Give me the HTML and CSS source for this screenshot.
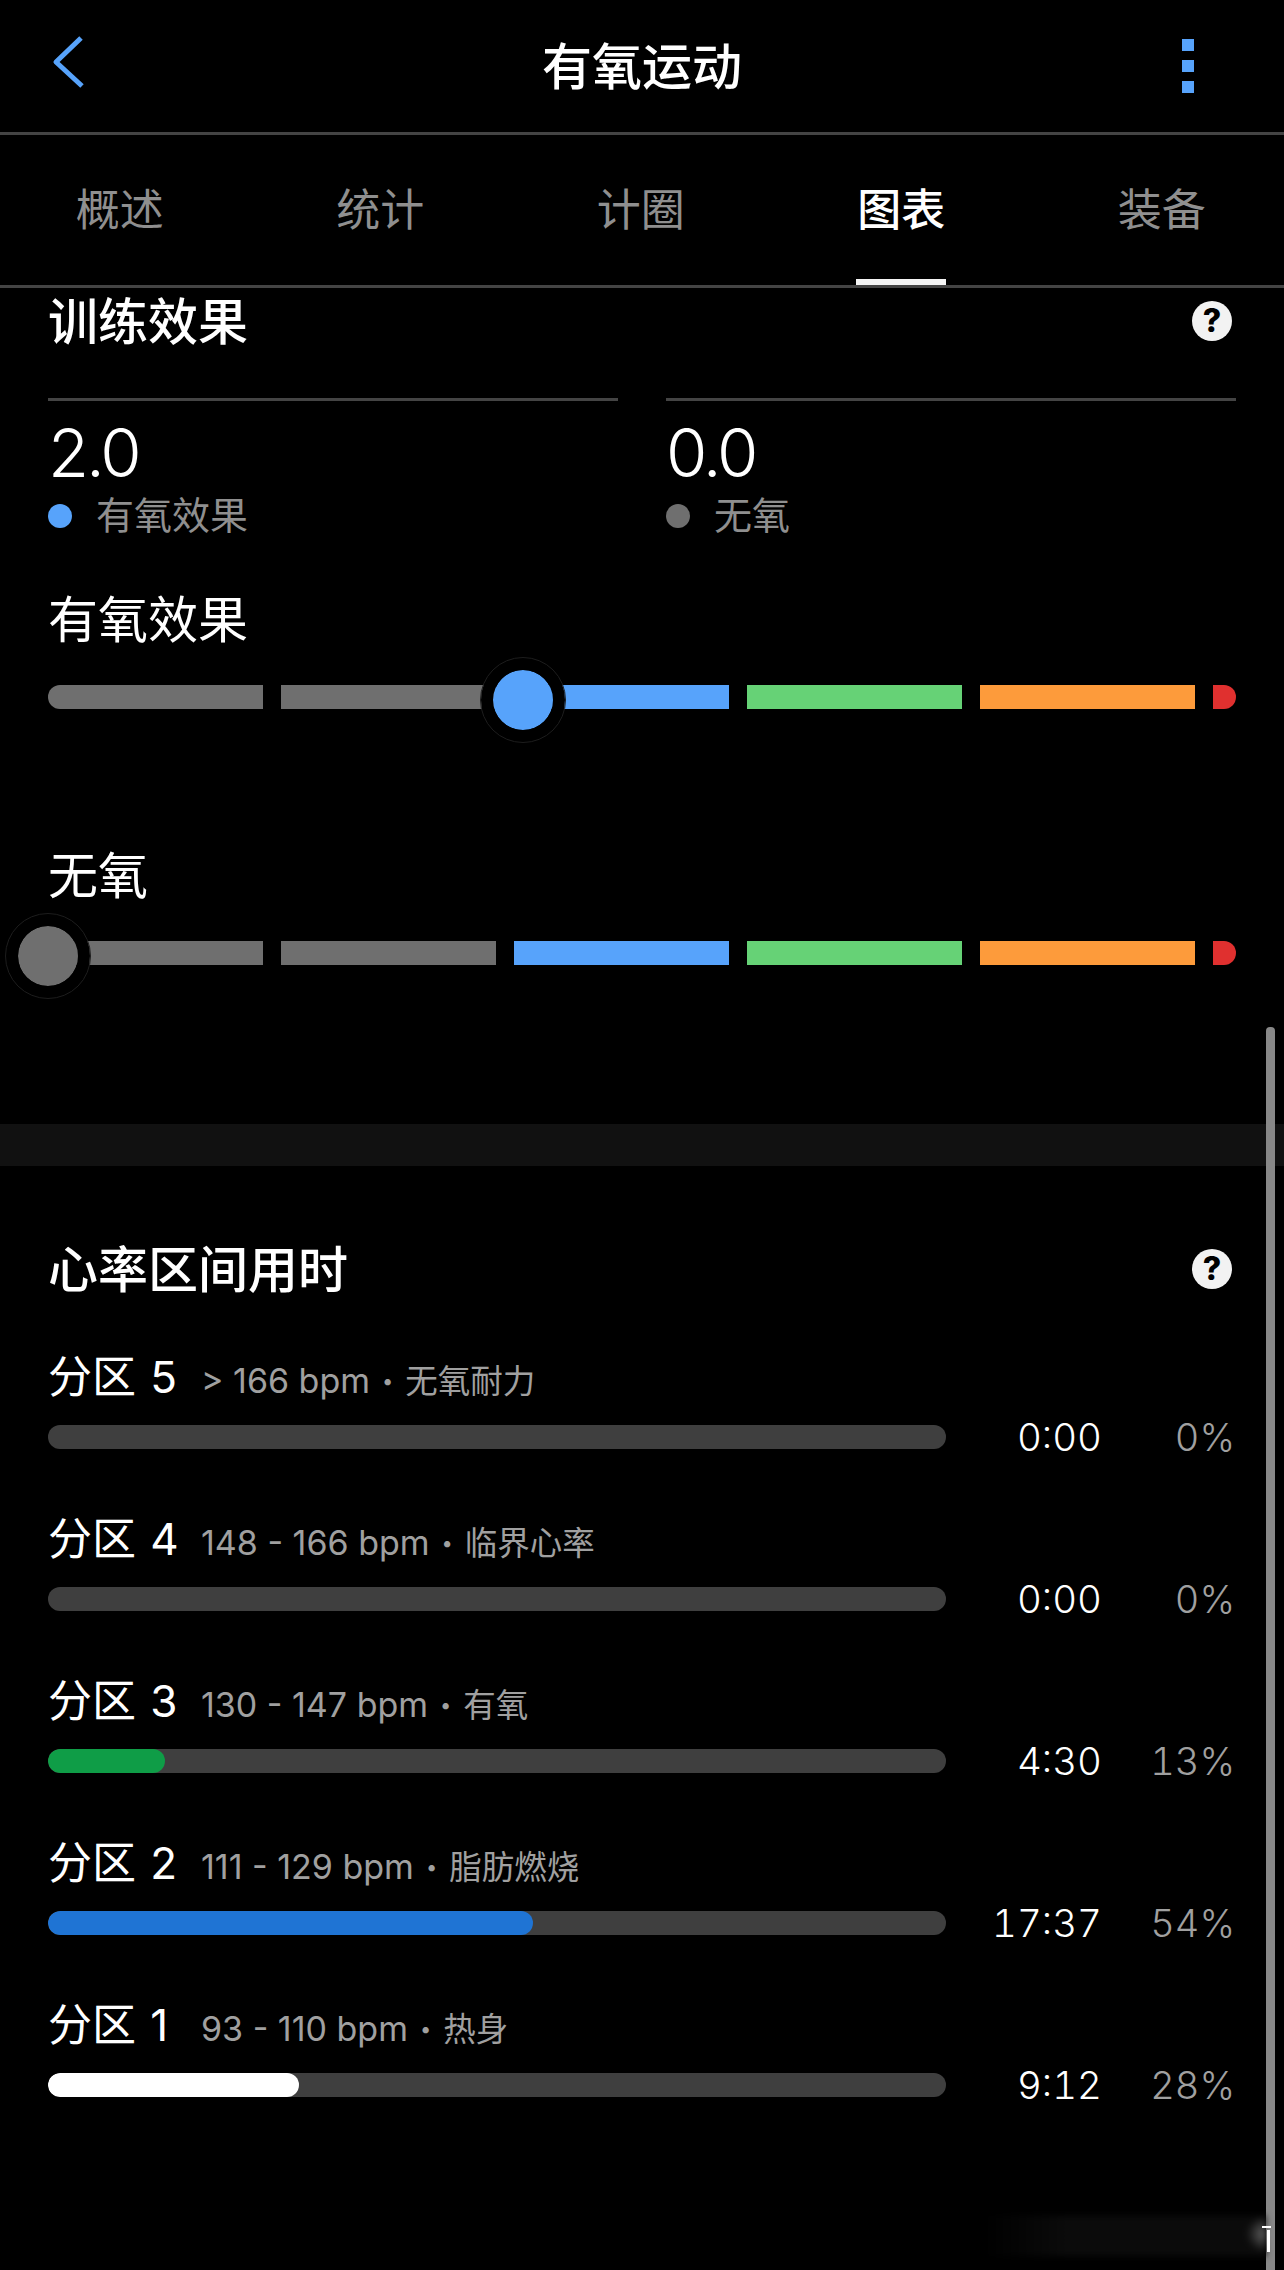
FILE: index.html
```html
<!DOCTYPE html>
<html lang="zh-CN">
<head>
    <meta charset="UTF-8">
    <meta name="viewport" content="width=device-width, initial-scale=1.0">
    <title>有氧运动</title>
    <link rel="stylesheet" href="styles.css">
</head>
<body>
    <div class="screen">
        <header class="topbar">
            <svg class="back-icon" width="60" height="75" viewBox="0 0 60 75">
                <path d="M41 13 L16 37 L42 61" fill="none" stroke="#57a3fb" stroke-width="5" stroke-linejoin="round"/>
            </svg>
            <h1>有氧运动</h1>
            <div class="more-icon"><span></span><span></span><span></span></div>
        </header>

        <nav class="tabs">
            <div class="tab">概述</div>
            <div class="tab">统计</div>
            <div class="tab">计圈</div>
            <div class="tab active">图表</div>
            <div class="tab">装备</div>
        </nav>

        <section class="effect">
            <div class="section-head">
                <h2>训练效果</h2>
                <span class="help">?</span>
            </div>

            <div class="stats">
                <div class="stat">
                    <div class="stat-value">2.0</div>
                    <div class="stat-label"><i class="dot blue"></i><span>有氧效果</span></div>
                </div>
                <div class="stat">
                    <div class="stat-value">0.0</div>
                    <div class="stat-label"><i class="dot gray"></i><span>无氧</span></div>
                </div>
            </div>

            <h3 class="slider-title first">有氧效果</h3>
            <div class="slider">
                <div class="seg gray"></div>
                <div class="seg gray"></div>
                <div class="seg blue"></div>
                <div class="seg green"></div>
                <div class="seg orange"></div>
                <div class="seg red"></div>
                <div class="thumb blue" style="left: 475px"></div>
            </div>

            <h3 class="slider-title">无氧</h3>
            <div class="slider">
                <div class="seg gray"></div>
                <div class="seg gray"></div>
                <div class="seg blue"></div>
                <div class="seg green"></div>
                <div class="seg orange"></div>
                <div class="seg red"></div>
                <div class="thumb gray" style="left: 0px"></div>
            </div>
        </section>

        <div class="band"></div>

        <section class="zones">
            <div class="section-head">
                <h2>心率区间用时</h2>
                <span class="help">?</span>
            </div>

            <div class="zone">
                <div class="zone-head"><span class="zone-name">分区 5</span><span class="zone-info">&gt; 166 bpm<span class="sep">•</span><span class="zone-type">无氧耐力</span></span></div>
                <div class="bar"></div>
                <div class="time">0:00</div>
                <div class="pct">0%</div>
            </div>
            <div class="zone">
                <div class="zone-head"><span class="zone-name">分区 4</span><span class="zone-info">148 - 166 bpm<span class="sep">•</span><span class="zone-type">临界心率</span></span></div>
                <div class="bar"></div>
                <div class="time">0:00</div>
                <div class="pct">0%</div>
            </div>
            <div class="zone">
                <div class="zone-head"><span class="zone-name">分区 3</span><span class="zone-info">130 - 147 bpm<span class="sep">•</span><span class="zone-type">有氧</span></span></div>
                <div class="bar"><div class="fill z3" style="width: 13%"></div></div>
                <div class="time">4:30</div>
                <div class="pct">13%</div>
            </div>
            <div class="zone">
                <div class="zone-head"><span class="zone-name">分区 2</span><span class="zone-info">111 - 129 bpm<span class="sep">•</span><span class="zone-type">脂肪燃烧</span></span></div>
                <div class="bar"><div class="fill z2" style="width: 54%"></div></div>
                <div class="time">17:37</div>
                <div class="pct">54%</div>
            </div>
            <div class="zone">
                <div class="zone-head"><span class="zone-name">分区 1</span><span class="zone-info">93 - 110 bpm<span class="sep">•</span><span class="zone-type">热身</span></span></div>
                <div class="bar"><div class="fill z1" style="width: 28%"></div></div>
                <div class="time">9:12</div>
                <div class="pct">28%</div>
            </div>
        </section>

        <div class="scrollbar"></div>
        <div class="smudge"></div>
        <div class="mark"></div>
    </div>
</body>
</html>
```

FILE: styles.css
```css
body {
    margin: 0;
    background: #000;
    color: #fff;
    font-family: "Inter", "Noto Sans CJK SC", sans-serif;
}
h1, h2, h3 {
    margin: 0;
    font-weight: 400;
}
.screen {
    position: relative;
    width: 1284px;
    height: 2270px;
    overflow: hidden;
    background: #000;
}

/* top bar */
.topbar {
    position: relative;
    height: 130px;
    padding-top: 2px;
    border-bottom: 3px solid #444;
    display: flex;
    align-items: center;
    justify-content: center;
}
.topbar h1 {
    font-size: 50px;
    line-height: 60px;
    font-weight: 500;
}
.back-icon {
    position: absolute;
    left: 40px;
    top: 25px;
}
.more-icon {
    position: absolute;
    left: 1182px;
    top: 39px;
    display: flex;
    flex-direction: column;
    gap: 9px;
}
.more-icon span {
    width: 12px;
    height: 12px;
    background: #57a3fb;
}

/* tabs */
.tabs {
    display: grid;
    grid-template-columns: repeat(5, 260.5px);
    margin-left: -10.5px;
    width: 1310px;
    height: 150px;
    border-bottom: 3px solid #444;
}
.tab {
    position: relative;
    text-align: center;
    font-size: 44px;
    line-height: 150px;
    height: 150px;
    color: #8f8f8f;
}
.tab.active {
    color: #fff;
    font-weight: 500;
}
.tab.active::after {
    content: "";
    position: absolute;
    left: 85px;
    bottom: 0;
    width: 90px;
    height: 6px;
    background: #f4f4f4;
}

/* training effect */
.effect {
    padding: 9px 48px 0;
}
.section-head {
    display: flex;
    align-items: center;
    justify-content: space-between;
    height: 50px;
}
.section-head h2 {
    font-size: 50px;
    line-height: 50px;
    font-weight: 500;
}
.help {
    width: 40px;
    height: 40px;
    margin: 0 4px 3px 0;
    border-radius: 50%;
    background: #f2f2f2;
    color: #000;
    font-size: 32px;
    font-weight: 800;
    line-height: 40px;
    text-align: center;
}
.stats {
    display: grid;
    grid-template-columns: 570px 570px;
    gap: 48px;
    margin-top: 51px;
}
.stat {
    border-top: 3px solid #444;
}
.stat-value {
    font-size: 67px;
    line-height: 70px;
    font-weight: 300;
    letter-spacing: -3px;
    padding-top: 17px;
}
.stat-label {
    display: flex;
    align-items: center;
    gap: 24px;
    height: 44px;
    margin-top: 6px;
    font-size: 38px;
    color: #8f8f8f;
}
.stat-label span {
    margin-bottom: 8px;
}
.dot {
    width: 24px;
    height: 24px;
    border-radius: 50%;
}
.dot.blue { background: #57a3fb; }
.dot.gray { background: #6f6f6f; }

.slider-title {
    font-size: 50px;
    line-height: 50px;
    margin-top: 142px;
    margin-bottom: 40px;
}
.slider-title.first {
    margin-top: 57px;
}
.slider {
    position: relative;
    display: grid;
    grid-template-columns: repeat(5, 215px) 23px;
    gap: 18px;
    height: 24px;
}
.seg.gray { background: #6f6f6f; }
.seg.blue { background: #57a3fb; }
.seg.green { background: #66d276; }
.seg.orange { background: #fd9b3b; }
.seg.red { background: #e0302f; }
.seg:first-child {
    border-radius: 12px 0 0 12px;
}
.seg:nth-child(6) {
    border-radius: 0 12px 12px 0;
}
.thumb {
    position: absolute;
    top: -27px;
    width: 60px;
    height: 60px;
    margin-left: -42px;
    border-radius: 50%;
    border: 12px solid #000;
    outline: 1px solid #1d1d1d;
    background-clip: padding-box;
}
.thumb.blue { background-color: #57a3fb; }
.thumb.gray { background-color: #6f6f6f; }

.band {
    height: 42px;
    margin-top: 159px;
    background: #111;
}

/* heart rate zones */
.zones {
    padding: 79px 48px 0;
}
.zones .section-head {
    margin-bottom: 55px;
}
.zone {
    display: grid;
    grid-template-columns: 898px 156px 133px;
    grid-template-rows: 54px 24px;
    row-gap: 21px;
    align-items: center;
    align-content: start;
    height: 162px;
}
.zone-head {
    grid-column: 1 / -1;
    display: flex;
    align-items: baseline;
    line-height: 50px;
    padding-top: 4px;
}
.zone-name {
    font-size: 44px;
    word-spacing: 2px;
    width: 153px;
}
.zone-info {
    font-size: 34px;
    color: #a0a0a0;
}
.sep {
    font-size: 20px;
    margin: 0 12px;
    vertical-align: 5px;
}
.zone-type {
    font-size: 32.5px;
}
.bar {
    height: 24px;
    border-radius: 12px;
    background: #3f3f3f;
    overflow: hidden;
}
.fill {
    height: 100%;
    border-radius: 12px;
}
.fill.z3 { background: #0f9d47; }
.fill.z2 { background: #1f74d4; }
.fill.z1 { background: #fff; }
.time, .pct {
    text-align: right;
    font-size: 38.5px;
    font-weight: 300;
    font-variant-numeric: tabular-nums;
    line-height: 24px;
}
.pct {
    font-size: 38px;
    color: #a0a0a0;
}

/* overlays */
.scrollbar {
    position: absolute;
    left: 1266px;
    top: 1027px;
    bottom: 0;
    width: 9px;
    border-radius: 4px 4px 0 0;
    background: #888;
}
.smudge {
    position: absolute;
    left: 984px;
    top: 2216px;
    width: 282px;
    height: 40px;
    background: radial-gradient(ellipse 20px 18px at 100% 45%, #666, transparent), linear-gradient(to right, #000, #0b0b0b 30%, #0b0b0b 100%);
    filter: blur(3px);
}
.mark {
    position: absolute;
    left: 1267px;
    top: 2230px;
    width: 3px;
    height: 22px;
    background: #fff;
}
.mark::before {
    content: "";
    position: absolute;
    left: -5px;
    top: -4px;
    width: 9px;
    height: 2px;
    background: #fff;
}
```
